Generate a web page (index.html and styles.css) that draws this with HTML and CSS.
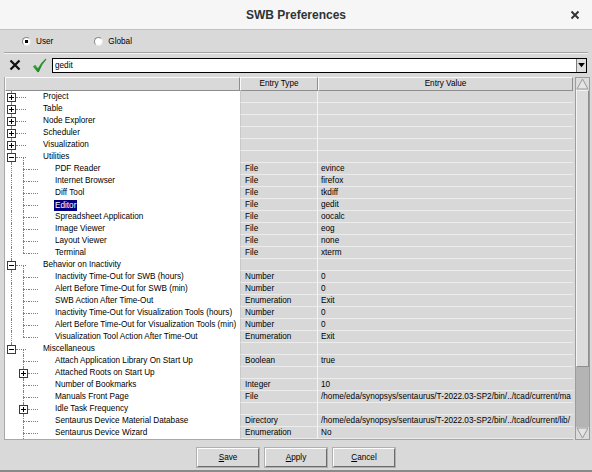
FILE: index.html
```html
<!DOCTYPE html>
<html lang="en">
<head>
  <meta charset="UTF-8" />
  <meta name="viewport" content="width=device-width, initial-scale=1.0"/>
  <title>SWB Preferences</title>
  <link rel="stylesheet" href="styles.css">
</head>
<body>
<div class="window">

  <div class="titlebar">
    <span></span>
    <span class="title">SWB Preferences</span>
    <svg class="close" viewBox="0 0 10 10" width="10" height="10">
      <path d="M1.5 1.5 L8.5 8.5 M8.5 1.5 L1.5 8.5" stroke="#2e3436" stroke-width="1.9" fill="none"/>
    </svg>
  </div>

  <div class="scope">
    <label class="radio"><span class="dot on"></span>User</label>
    <label class="radio"><span class="dot"></span>Global</label>
  </div>
  <div class="sep"></div>

  <div class="toolbar">
    <svg class="tool" viewBox="0 0 12 12" width="12" height="12">
      <path d="M1.5 1.5 L10.5 10.5 M10.5 1.5 L1.5 10.5" stroke="#111" stroke-width="2.3" fill="none"/>
    </svg>
    <svg class="tool ok" viewBox="0 0 15 15" width="15" height="15">
      <defs>
        <linearGradient id="tick" x1="0" y1="0" x2="1" y2="1">
          <stop offset="0" stop-color="#4cc24c"/>
          <stop offset="1" stop-color="#0d6a12"/>
        </linearGradient>
      </defs>
      <path d="M0.8 8.6 L3.2 6.8 L5.9 10.2 Q9 4.6 13.6 0.6 L14.4 1.6 Q9.8 6.4 6.9 14 L5.6 14.3 Z" fill="url(#tick)"/>
    </svg>
    <div class="entry">
      <span class="entry-text">gedit</span>
      <span class="drop">
        <svg viewBox="0 0 8 6" width="7" height="5"><path d="M0 0 H8 L4 5 Z" fill="#000"/></svg>
      </span>
    </div>
  </div>

  <div class="prefs">
    <div class="table">
      <div class="row head">
        <div class="hcell"></div>
        <div class="hcell">Entry Type</div>
        <div class="hcell">Entry Value</div>
      </div>

      <!-- collapsed groups -->
      <div class="row">
        <div class="tree"><span class="g v hr"><i class="box plus"></i></span><span class="g h"></span><span class="label">Project</span></div>
        <div class="type"></div><div class="val"></div>
      </div>
      <div class="row">
        <div class="tree"><span class="g v hr"><i class="box plus"></i></span><span class="g h"></span><span class="label">Table</span></div>
        <div class="type"></div><div class="val"></div>
      </div>
      <div class="row">
        <div class="tree"><span class="g v hr"><i class="box plus"></i></span><span class="g h"></span><span class="label">Node Explorer</span></div>
        <div class="type"></div><div class="val"></div>
      </div>
      <div class="row">
        <div class="tree"><span class="g v hr"><i class="box plus"></i></span><span class="g h"></span><span class="label">Scheduler</span></div>
        <div class="type"></div><div class="val"></div>
      </div>
      <div class="row">
        <div class="tree"><span class="g v hr"><i class="box plus"></i></span><span class="g h"></span><span class="label">Visualization</span></div>
        <div class="type"></div><div class="val"></div>
      </div>

      <!-- Utilities -->
      <div class="row">
        <div class="tree"><span class="g v hr"><i class="box"></i></span><span class="g h vd"></span><span class="label">Utilities</span></div>
        <div class="type"></div><div class="val"></div>
      </div>
      <div class="row">
        <div class="tree"><span class="g v"></span><span class="g v hr"></span><span class="g h"></span><span class="label">PDF Reader</span></div>
        <div class="type">File</div><div class="val">evince</div>
      </div>
      <div class="row">
        <div class="tree"><span class="g v"></span><span class="g v hr"></span><span class="g h"></span><span class="label">Internet Browser</span></div>
        <div class="type">File</div><div class="val">firefox</div>
      </div>
      <div class="row">
        <div class="tree"><span class="g v"></span><span class="g v hr"></span><span class="g h"></span><span class="label">Diff Tool</span></div>
        <div class="type">File</div><div class="val">tkdiff</div>
      </div>
      <div class="row">
        <div class="tree"><span class="g v"></span><span class="g v hr"></span><span class="g h"></span><span class="label selected">Editor</span></div>
        <div class="type">File</div><div class="val">gedit</div>
      </div>
      <div class="row">
        <div class="tree"><span class="g v"></span><span class="g v hr"></span><span class="g h"></span><span class="label">Spreadsheet Application</span></div>
        <div class="type">File</div><div class="val">oocalc</div>
      </div>
      <div class="row">
        <div class="tree"><span class="g v"></span><span class="g v hr"></span><span class="g h"></span><span class="label">Image Viewer</span></div>
        <div class="type">File</div><div class="val">eog</div>
      </div>
      <div class="row">
        <div class="tree"><span class="g v"></span><span class="g v hr"></span><span class="g h"></span><span class="label">Layout Viewer</span></div>
        <div class="type">File</div><div class="val">none</div>
      </div>
      <div class="row">
        <div class="tree"><span class="g v"></span><span class="g vt hr"></span><span class="g h"></span><span class="label">Terminal</span></div>
        <div class="type">File</div><div class="val">xterm</div>
      </div>

      <!-- Behavior on Inactivity -->
      <div class="row">
        <div class="tree"><span class="g v hr"><i class="box"></i></span><span class="g h vd"></span><span class="label">Behavior on Inactivity</span></div>
        <div class="type"></div><div class="val"></div>
      </div>
      <div class="row">
        <div class="tree"><span class="g v"></span><span class="g v hr"></span><span class="g h"></span><span class="label">Inactivity Time-Out for SWB (hours)</span></div>
        <div class="type">Number</div><div class="val">0</div>
      </div>
      <div class="row">
        <div class="tree"><span class="g v"></span><span class="g v hr"></span><span class="g h"></span><span class="label">Alert Before Time-Out for SWB (min)</span></div>
        <div class="type">Number</div><div class="val">0</div>
      </div>
      <div class="row">
        <div class="tree"><span class="g v"></span><span class="g v hr"></span><span class="g h"></span><span class="label">SWB Action After Time-Out</span></div>
        <div class="type">Enumeration</div><div class="val">Exit</div>
      </div>
      <div class="row">
        <div class="tree"><span class="g v"></span><span class="g v hr"></span><span class="g h"></span><span class="label">Inactivity Time-Out for Visualization Tools (hours)</span></div>
        <div class="type">Number</div><div class="val">0</div>
      </div>
      <div class="row">
        <div class="tree"><span class="g v"></span><span class="g v hr"></span><span class="g h"></span><span class="label">Alert Before Time-Out for Visualization Tools (min)</span></div>
        <div class="type">Number</div><div class="val">0</div>
      </div>
      <div class="row">
        <div class="tree"><span class="g v"></span><span class="g vt hr"></span><span class="g h"></span><span class="label">Visualization Tool Action After Time-Out</span></div>
        <div class="type">Enumeration</div><div class="val">Exit</div>
      </div>

      <!-- Miscellaneous -->
      <div class="row">
        <div class="tree"><span class="g vt hr"><i class="box"></i></span><span class="g h vd"></span><span class="label">Miscellaneous</span></div>
        <div class="type"></div><div class="val"></div>
      </div>
      <div class="row">
        <div class="tree"><span class="g"></span><span class="g v hr"></span><span class="g h"></span><span class="label">Attach Application Library On Start Up</span></div>
        <div class="type">Boolean</div><div class="val">true</div>
      </div>
      <div class="row">
        <div class="tree"><span class="g"></span><span class="g v hr"><i class="box plus"></i></span><span class="g h"></span><span class="label">Attached Roots on Start Up</span></div>
        <div class="type"></div><div class="val"></div>
      </div>
      <div class="row">
        <div class="tree"><span class="g"></span><span class="g v hr"></span><span class="g h"></span><span class="label">Number of Bookmarks</span></div>
        <div class="type">Integer</div><div class="val">10</div>
      </div>
      <div class="row">
        <div class="tree"><span class="g"></span><span class="g v hr"></span><span class="g h"></span><span class="label">Manuals Front Page</span></div>
        <div class="type">File</div><div class="val">/home/eda/synopsys/sentaurus/T-2022.03-SP2/bin/../tcad/current/ma</div>
      </div>
      <div class="row">
        <div class="tree"><span class="g"></span><span class="g v hr"><i class="box plus"></i></span><span class="g h"></span><span class="label">Idle Task Frequency</span></div>
        <div class="type"></div><div class="val"></div>
      </div>
      <div class="row">
        <div class="tree"><span class="g"></span><span class="g v hr"></span><span class="g h"></span><span class="label">Sentaurus Device Material Database</span></div>
        <div class="type">Directory</div><div class="val">/home/eda/synopsys/sentaurus/T-2022.03-SP2/bin/../tcad/current/lib/</div>
      </div>
      <div class="row">
        <div class="tree"><span class="g"></span><span class="g v hr"></span><span class="g h"></span><span class="label">Sentaurus Device Wizard</span></div>
        <div class="type">Enumeration</div><div class="val">No</div>
      </div>
    </div>

    <div class="scroll">
      <div class="arrow">
        <svg viewBox="0 0 13 12" width="13" height="12"><path d="M6.5 1 L12 11 H1 Z" fill="#e4e4e4" stroke="#9a9a9a" stroke-width="1"/></svg>
      </div>
      <div class="thumb"></div>
      <div class="trough"></div>
      <div class="arrow">
        <svg viewBox="0 0 13 12" width="13" height="12"><path d="M1 1 H12 L6.5 11 Z" fill="#e4e4e4" stroke="#9a9a9a" stroke-width="1"/></svg>
      </div>
    </div>
  </div>

  <div class="buttons">
    <button class="btn"><u>S</u>ave</button>
    <button class="btn"><u>A</u>pply</button>
    <button class="btn"><u>C</u>ancel</button>
  </div>

</div>
</body>
</html>
```

FILE: styles.css
```css
:root {
  --bg-color: #d9d9d9;
  --cell-color: #d8d8d8;
  --line-color: #808080;
  --title-bg: #f6f6f6;
  --text-color: #000000;
}

* {
  box-sizing: border-box;
}

body {
  margin: 0;
  background-color: var(--bg-color);
  color: var(--text-color);
  font-family: "Liberation Sans", Arial, sans-serif;
  font-size: 8.2px;
}

.window {
  width: 592px;
  height: 472px;
  display: flex;
  flex-direction: column;
  background-color: var(--bg-color);
  border-bottom: 2px solid #8a8a8a;
  overflow: hidden;
}

/* Title bar */
.titlebar {
  flex: none;
  height: 30px;
  display: grid;
  grid-template-columns: 1fr auto 1fr;
  align-items: center;
  background-color: var(--title-bg);
  border-bottom: 1px solid #c2c2c2;
}

.title {
  font-size: 12px;
  font-weight: bold;
  color: #2e3436;
}

.close {
  justify-self: end;
  margin-right: 12px;
}

/* User / Global */
.scope {
  flex: none;
  height: 22px;
  display: flex;
  align-items: center;
  gap: 41px;
  padding-left: 22px;
}

.radio {
  display: flex;
  align-items: center;
  gap: 5px;
}

.dot {
  width: 9px;
  height: 9px;
  border-radius: 50%;
  background-color: #fff;
  border: 1px solid;
  border-color: #8a8a8a #e6e6e6 #e6e6e6 #8a8a8a;
}

.dot.on {
  background: radial-gradient(circle, #000 0 1.6px, #fff 2px);
}

.sep {
  flex: none;
  margin: 0 4px;
  height: 2px;
  border-top: 1px solid #a4a4a4;
  border-bottom: 1px solid #f2f2f2;
}

/* Search / edit bar */
.toolbar {
  flex: none;
  height: 22px;
  display: flex;
  align-items: center;
  padding: 0 5px 0 9px;
}

.tool.ok {
  margin-left: 11px;
}

.entry {
  flex: 1;
  height: 15px;
  margin-left: 5px;
  display: flex;
  align-items: stretch;
  background-color: #fff;
  border: 1px solid #000;
}

.entry-text {
  padding-left: 2px;
  line-height: 13px;
}

.drop {
  margin-left: auto;
  width: 10px;
  display: flex;
  align-items: center;
  justify-content: center;
  background-color: #dedede;
  border-left: 1px solid #7a7a7a;
}

/* Preference table */
.prefs {
  flex: none;
  height: 363px;
  margin-top: 1px;
  display: flex;
  padding: 0 2px 0 4px;
}

.table {
  width: 569px;
  border-left: 1px solid #a8a8a8;
  border-bottom: 1px solid #a8a8a8;
  background-color: #fff;
  overflow: hidden;
}

.row {
  display: grid;
  grid-template-columns: 235px 78px 255px;
  height: 12px;
  line-height: 12px;
}

.row.head {
  height: 14px;
}

.hcell {
  background-color: var(--bg-color);
  border: 1px solid;
  border-color: #fafafa #8e8e8e #8e8e8e #fafafa;
  text-align: center;
  line-height: 12px;
}

.tree {
  display: flex;
  background-color: #fff;
  white-space: nowrap;
  overflow: hidden;
}

.type,
.val {
  background-color: var(--cell-color);
  border-bottom: 1px solid #ececec;
  line-height: 11px;
  white-space: nowrap;
  overflow: hidden;
}

.type {
  padding-left: 4px;
  border-left: 1px solid #c8c8c8;
  border-right: 1px solid #f4f4f4;
}

.val {
  padding-left: 3px;
}

.label {
  margin-left: 14px;
}

.label.selected {
  background-color: #000080;
  color: #fff;
  padding: 0 1px;
  margin-left: 13px;
  height: 11px;
  line-height: 11px;
  margin-top: 0.5px;
}

/* Tree guides: one 12px cell per level */
.g {
  position: relative;
  flex: none;
  width: 12px;
  height: 12px;
}

.g.v::before,
.g.vt::before,
.g.vd::before {
  content: "";
  position: absolute;
  left: 6px;
  top: 0;
  bottom: 0;
  border-left: 1px dotted var(--line-color);
}

.g.vt::before {
  bottom: 6px;
}

.g.vd::before {
  top: 6px;
}

.g.hr::after,
.g.h::after {
  content: "";
  position: absolute;
  top: 6px;
  left: 6px;
  right: 0;
  border-top: 1px dotted var(--line-color);
}

.g.h::after {
  left: 0;
  right: 3px;
}

.box {
  position: absolute;
  left: 2px;
  top: 2px;
  width: 9px;
  height: 9px;
  background-color: #fff;
  border: 1px solid #3a3a3a;
  z-index: 1;
}

.box::before {
  content: "";
  position: absolute;
  left: 1px;
  top: 3px;
  width: 5px;
  height: 1px;
  background-color: #000;
}

.box.plus::after {
  content: "";
  position: absolute;
  left: 3px;
  top: 1px;
  width: 1px;
  height: 5px;
  background-color: #000;
}

/* Scrollbar */
.scroll {
  width: 15px;
  margin-left: 2px;
  display: flex;
  flex-direction: column;
  background-color: #b4b4b4;
  border: 1px solid #9c9c9c;
}

.arrow {
  flex: none;
  height: 12px;
  background-color: #dcdcdc;
  line-height: 0;
}

.thumb {
  flex: none;
  height: 277px;
  background-color: #dcdcdc;
  border: 1px solid;
  border-color: #f4f4f4 #8e8e8e #8e8e8e #f4f4f4;
}

.trough {
  flex: 1;
}

/* Dialog buttons */
.buttons {
  flex: 1;
  display: flex;
  justify-content: center;
  align-items: flex-start;
  gap: 6px;
  padding-top: 8px;
}

.btn {
  width: 62px;
  height: 19px;
  padding: 0;
  font-family: inherit;
  font-size: 8.2px;
  color: var(--text-color);
  background-color: var(--bg-color);
  border: 1px solid;
  border-color: #ffffff #6c6c6c #6c6c6c #ffffff;
  box-shadow: 0 0 0 1px #b0b0b0;
}
```
